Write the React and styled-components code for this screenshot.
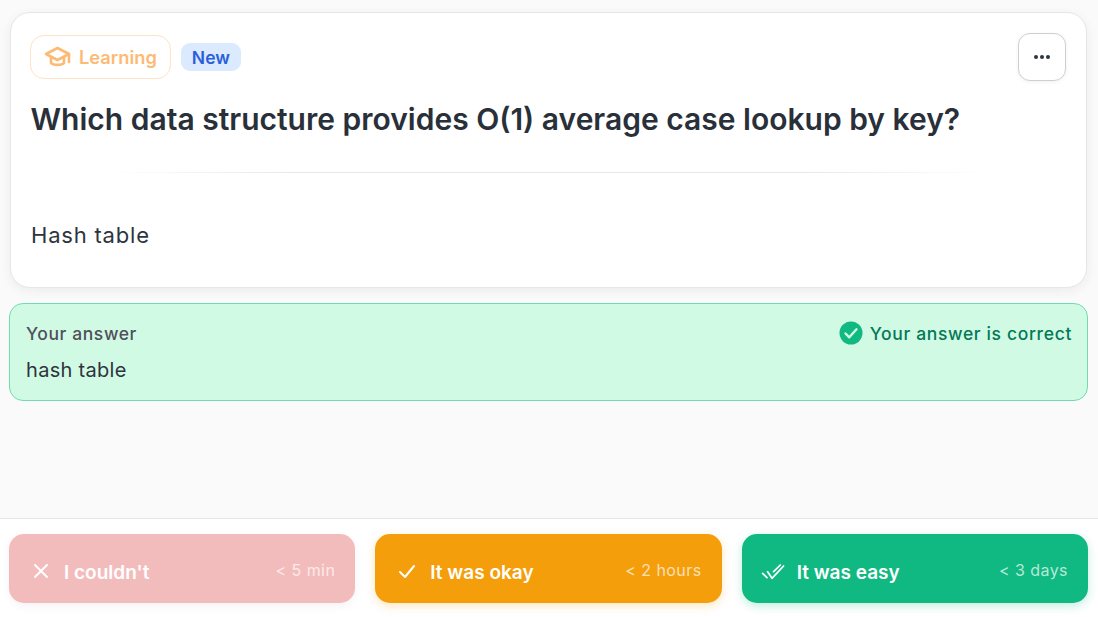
import styled, { createGlobalStyle } from "styled-components";

const GlobalStyle = createGlobalStyle`
  html, body {
    margin: 0;
    padding: 0;
    height: 100%;
    background: #fafafa;
    font-family: Inter, "Liberation Sans", sans-serif;
  }
`;

const Page = styled.div`
  height: 617px;
  display: flex;
  flex-direction: column;
  overflow: hidden;
`;

const Main = styled.main`
  flex: 1;
  padding: 12px 10px 0 9px;
  display: flex;
  flex-direction: column;
  gap: 15px;
`;

const Card = styled.section`
  margin: 0 1px 0 0.5px;
  height: 276px;
  box-sizing: border-box;
  background: #fff;
  border: 1px solid #e6e6e6;
  border-radius: 20px;
  box-shadow: 0 3px 12px rgba(0, 0, 0, 0.06);
  padding: 20px 20px 0 20.5px;
`;

const CardTop = styled.div`
  display: flex;
  align-items: center;
  justify-content: space-between;
`;

const Badges = styled.div`
  display: flex;
  align-items: center;
  gap: 10px;
  margin-left: -1px;
`;

const Mode = styled.span`
  display: flex;
  align-items: center;
  gap: 8px;
  height: 44px;
  box-sizing: border-box;
  padding: 0 13px;
  border: 1px solid #fde3c8;
  border-radius: 14px;
  color: #fdba74;
  font-size: 18.3px;
  font-weight: 600;
`;

const NewTag = styled.span`
  height: 28px;
  padding: 0 11px;
  display: flex;
  align-items: center;
  border-radius: 9px;
  background: #dbeafe;
  color: #2b5fd9;
  font-size: 17.5px;
  font-weight: 600;
`;

const MenuButton = styled.button`
  width: 48px;
  height: 48px;
  display: flex;
  align-items: center;
  justify-content: center;
  gap: 2px;
  background: #fff;
  border: 1px solid #cfcfd2;
  border-radius: 12px;
  box-shadow: 0 1px 4px rgba(0, 0, 0, 0.06);
  padding: 0;
`;

const Dot = styled.i`
  width: 4px;
  height: 4px;
  border-radius: 50%;
  background: #2f3640;
`;

const Question = styled.h1`
  margin: 19px 0 0 -0.5px;
  font-size: 30px;
  line-height: 38px;
  font-weight: 600;
  color: #29303a;
`;

const Divider = styled.hr`
  margin: 34px 80px 0;
  height: 1px;
  border: 0;
  background: linear-gradient(90deg, transparent, #e8e8e8 20%, #e8e8e8 80%, transparent);
`;

const Reply = styled.p`
  margin: 47px 0 0;
  font-size: 22px;
  line-height: 30px;
  letter-spacing: 0.8px;
  color: #2e343d;
`;

const AnswerBox = styled.section`
  height: 98px;
  box-sizing: border-box;
  padding: 17px 15px 0 16px;
  background: #d1fae5;
  border: 1px solid #71dcb0;
  border-radius: 14px;
`;

const AnswerHead = styled.div`
  display: flex;
  align-items: center;
  justify-content: space-between;
  height: 24px;
`;

const AnswerLabel = styled.span`
  font-size: 17.5px;
  font-weight: 500;
  letter-spacing: 0.6px;
  color: #4f5058;
`;

const Verdict = styled.span`
  display: flex;
  align-items: center;
  gap: 7px;
  font-size: 17.5px;
  font-weight: 500;
  letter-spacing: 0.65px;
  color: #047857;
`;

const AnswerText = styled.p`
  margin: 11px 0 0;
  font-size: 20px;
  line-height: 28px;
  letter-spacing: 0.3px;
  color: #2e343d;
`;

const Footer = styled.footer`
  height: 99px;
  box-sizing: border-box;
  padding: 15px 10px 0 9px;
  background: #fff;
  border-top: 1px solid #e5e5e5;
  display: grid;
  grid-template-columns: repeat(3, 1fr);
  gap: 20px;
  align-items: start;
`;

const Grade = styled.button`
  height: 69px;
  display: flex;
  align-items: center;
  padding: 7px 20px 0 22px;
  border: 0;
  border-radius: 15px;
  background: ${(p) => p.$bg};
  box-shadow: 0 3px 10px ${(p) => p.$glow};
  color: #fff;
  font-family: inherit;
`;

const GradeIcon = styled.svg`
  width: 20px;
  height: 20px;
  flex: none;
  margin-top: -3px;
  overflow: visible;
  fill: none;
  stroke: currentColor;
  stroke-width: 2;
  stroke-linecap: round;
  stroke-linejoin: round;
`;

const GradeLabel = styled.span`
  margin-left: 13px;
  font-size: 19px;
  font-weight: 600;
`;

const GradeTime = styled.span`
  margin-left: auto;
  margin-top: -5px;
  font-size: 16px;
  letter-spacing: 0.45px;
  color: rgba(255, 255, 255, 0.7);
`;

const grades = [
  { label: "I couldn't", time: "< 5 min", bg: "#f3bcbc", glow: "rgba(0,0,0,0.05)", icon: <path d="M4 4l12 12M16 4L4 16" /> },
  { label: "It was okay", time: "< 2 hours", bg: "#f59e0b", glow: "rgba(245,158,11,0.25)", icon: <path d="M3 11l5 5 9-11" /> },
  {
    label: "It was easy",
    time: "< 3 days",
    bg: "#10b981",
    glow: "rgba(16,185,129,0.25)",
    icon: <path d="M-1.4 12.3L3 16.7M3.6 10.7L8 17.3 19.6 5M9.6 10.7L16.3 4" strokeWidth="1.7" />,
  },
];

export default function App() {
  return (
    <Page>
      <GlobalStyle />
      <Main>
        <Card>
          <CardTop>
            <Badges>
              <Mode>
                <svg width="27" height="24" viewBox="0 0 27 24" fill="none" stroke="#fdba74" strokeWidth="2.6" strokeLinejoin="round" strokeLinecap="round">
                  <path d="M13.5 3L2 9l11.5 6L25 9z" />
                  <path d="M7 12v6c2 2.5 11 2.5 13 0v-6" />
                  <path d="M25 9v8" />
                </svg>
                Learning
              </Mode>
              <NewTag>New</NewTag>
            </Badges>
            <MenuButton aria-label="More">
              <Dot />
              <Dot />
              <Dot />
            </MenuButton>
          </CardTop>
          <Question>Which data structure provides O(1) average case lookup by key?</Question>
          <Divider />
          <Reply>Hash table</Reply>
        </Card>
        <AnswerBox>
          <AnswerHead>
            <AnswerLabel>Your answer</AnswerLabel>
            <Verdict>
              <svg width="24" height="24" viewBox="0 0 24 24">
                <circle cx="12" cy="12" r="11.5" fill="#10b981" />
                <path d="M6.5 12.5l3.8 3.8 7.2-8" fill="none" stroke="#d1fae5" strokeWidth="2.4" strokeLinecap="round" strokeLinejoin="round" />
              </svg>
              Your answer is correct
            </Verdict>
          </AnswerHead>
          <AnswerText>hash table</AnswerText>
        </AnswerBox>
      </Main>
      <Footer>
        {grades.map((g) => (
          <Grade key={g.label} $bg={g.bg} $glow={g.glow}>
            <GradeIcon viewBox="0 0 20 20">{g.icon}</GradeIcon>
            <GradeLabel>{g.label}</GradeLabel>
            <GradeTime>{g.time}</GradeTime>
          </Grade>
        ))}
      </Footer>
    </Page>
  );
}
